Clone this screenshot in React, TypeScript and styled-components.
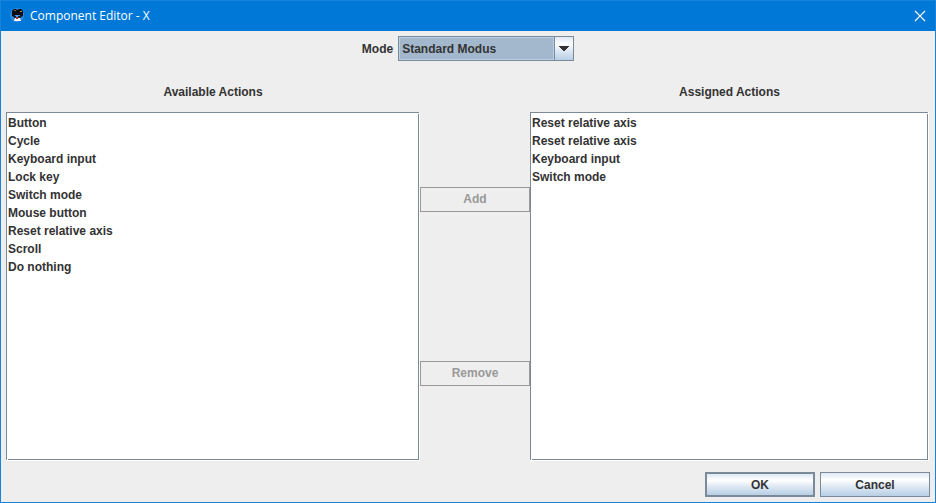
import React from "react";
import styled, { createGlobalStyle, css } from "styled-components";

const colors = {
  title: "#0078d7",
  frame: "#1883d7",
  panel: "#eeeeee",
  border: "#7a8a99",
  text: "#333333",
  disabled: "#999999",
  selection: "#a3b8cc",
  focus: "#b8cfe5",
};

const metalGradient = "linear-gradient(#dde8f3 0%, #ffffff 30%, #dde8f3 60%, #b8cfe5 100%)";

const GlobalStyle = createGlobalStyle`
  *, *::before, *::after { box-sizing: border-box; }
  body { margin: 0; }
  button, select { font: inherit; color: inherit; margin: 0; border-radius: 0; }
`;

const Dialog = styled.main`
  display: flex;
  flex-direction: column;
  min-height: 100vh;
  border: 1px solid ${colors.frame};
  background: ${colors.panel};
  color: ${colors.text};
  font: bold 12px/18px "Liberation Sans", Arial, sans-serif;
`;

const TitleBar = styled.header`
  display: flex;
  align-items: center;
  gap: 5px;
  height: 30px;
  padding-left: 8px;
  background: ${colors.title};
  color: #ffffff;
`;

const Title = styled.h1`
  flex: 1;
  margin: 0;
  font: 12px/18px "Open Sans", "Segoe UI", sans-serif;
`;

const CloseButton = styled.button`
  display: flex;
  align-items: center;
  justify-content: center;
  width: 30px;
  height: 28px;
  padding: 0;
  border: 0;
  background: transparent;
`;

const ModeBar = styled.div`
  display: flex;
  justify-content: center;
  align-items: center;
  gap: 5px;
  padding: 5px;
`;

const SelectBox = styled.div`
  display: grid;
  width: 176px;
  height: 25px;
  border: 1px solid ${colors.border};
  background: ${metalGradient};

  > * { grid-area: 1 / 1; }
`;

const ModeSelect = styled.select`
  appearance: none;
  width: 100%;
  height: 100%;
  padding: 0 24px 0 3px;
  border: 0;
  outline: 0;
  background: linear-gradient(${colors.selection}, ${colors.selection}) left / calc(100% - 19px) 100% no-repeat;
`;

const SelectArrow = styled.span`
  justify-self: end;
  display: flex;
  align-items: center;
  justify-content: center;
  width: 19px;
  border-left: 1px solid ${colors.border};
  pointer-events: none;
`;

const SelectFocus = styled.span`
  margin-right: 19px;
  border: 1px solid ${colors.focus};
  pointer-events: none;
`;

const Transfer = styled.section`
  flex: 1;
  display: grid;
  grid-template-columns: 414fr 110px 399fr;
  grid-template-rows: auto 1fr;
  padding: 0 6px 0 5px;
`;

const Heading = styled.label`
  padding: 17px 0 11px;
  text-align: center;
`;

const ListFrame = styled.div`
  position: relative;
  display: flex;
  padding: 0 1px 1px 0;
  background: #ffffff;

  &::before, &::after {
    content: "";
    position: absolute;
    width: 1px;
    height: 1px;
    background: #ffffff;
  }
  &::before { top: 1px; right: 1px; }
  &::after { bottom: 1px; left: 1px; }
`;

const ActionList = styled.select`
  appearance: none;
  flex: 1;
  min-width: 0;
  padding: 1px 0 0;
  border: 1px solid ${colors.border};
  outline: 0;
  background: #ffffff;
  overflow: auto;
`;

const Action = styled.option`
  height: 18px;
  padding: 2px 1px 0;
  font-weight: bold;
`;

const TransferButtons = styled.div`
  grid-column: 2;
  grid-row: 2;
  display: flex;
  flex-direction: column;
  justify-content: space-around;
  padding-bottom: 1px;
`;

const PushButton = styled.button<{ $primary?: boolean }>`
  width: 110px;
  height: 25px;
  padding: 0;
  border: 1px solid ${colors.border};
  background: ${metalGradient};
  ${(p) => p.$primary && css`border-width: 2px;`}

  &:disabled {
    border-color: ${colors.disabled};
    background: ${colors.panel};
    color: ${colors.disabled};
  }
`;

const Footer = styled.footer`
  display: flex;
  justify-content: flex-end;
  gap: 5px;
  padding: 11px 5px 5px;
`;

const available = [
  "Button",
  "Cycle",
  "Keyboard input",
  "Lock key",
  "Switch mode",
  "Mouse button",
  "Reset relative axis",
  "Scroll",
  "Do nothing",
];

const assigned = ["Reset relative axis", "Reset relative axis", "Keyboard input", "Switch mode"];

function AppIcon() {
  return (
    <svg width="16" height="16" viewBox="0 0 16 16" aria-hidden="true">
      <circle cx="8" cy="7" r="7" fill="#2f8ade" />
      <path d="M3 7V3l2-2h2l1 1 2-1h2l2 2v5l-2 1-1-2H6L5 9 3 8z" fill="#0b0d12" />
      <path d="M5 2h2v1H5z" fill="#6d6a55" />
      <path d="M11 3h2v1h-2z" fill="#c08a2c" />
      <path d="M5 8h2v2H5zM9 8h3v2H9z" fill="#14202c" />
      <path d="M7 7h2v2H7z" fill="#4f9be0" />
      <path d="M6 10h5l1 3H5z" fill="#ffffff" />
      <path d="M7 9h2v2H7z" fill="#b3262e" />
    </svg>
  );
}

function ActionOptions({ items }: { items: string[] }) {
  return (
    <>
      {items.map((name, i) => (
        <Action key={i} value={i}>{name}</Action>
      ))}
    </>
  );
}

export default function App() {
  return (
    <>
      <GlobalStyle />
      <Dialog>
        <TitleBar>
          <AppIcon />
          <Title>Component Editor - X</Title>
          <CloseButton type="button" aria-label="Close">
            <svg width="12" height="12" viewBox="0 0 12 12" fill="none" stroke="#ffffff" aria-hidden="true">
              <path d="M1 1 11 11M11 1 1 11" strokeWidth="1.1" />
            </svg>
          </CloseButton>
        </TitleBar>
        <ModeBar>
          <label htmlFor="mode">Mode</label>
          <SelectBox>
            <ModeSelect id="mode" defaultValue="standard">
              <option value="standard">Standard Modus</option>
            </ModeSelect>
            <SelectFocus />
            <SelectArrow>
              <svg width="10" height="5" viewBox="0 0 10 5" shapeRendering="crispEdges" aria-hidden="true">
                <path d="M0 0h10v1h-1v1h-1v1h-1v1h-1v1h-2v-1h-1v-1h-1v-1h-1v-1h-1z" fill={colors.text} />
              </svg>
            </SelectArrow>
          </SelectBox>
        </ModeBar>
        <Transfer>
          <Heading htmlFor="available">Available Actions</Heading>
          <span />
          <Heading htmlFor="assigned">Assigned Actions</Heading>
          <ListFrame>
            <ActionList id="available" multiple>
              <ActionOptions items={available} />
            </ActionList>
          </ListFrame>
          <TransferButtons>
            <PushButton type="button" disabled>Add</PushButton>
            <PushButton type="button" disabled>Remove</PushButton>
          </TransferButtons>
          <ListFrame>
            <ActionList id="assigned" multiple>
              <ActionOptions items={assigned} />
            </ActionList>
          </ListFrame>
        </Transfer>
        <Footer>
          <PushButton type="button" $primary>OK</PushButton>
          <PushButton type="button">Cancel</PushButton>
        </Footer>
      </Dialog>
    </>
  );
}
